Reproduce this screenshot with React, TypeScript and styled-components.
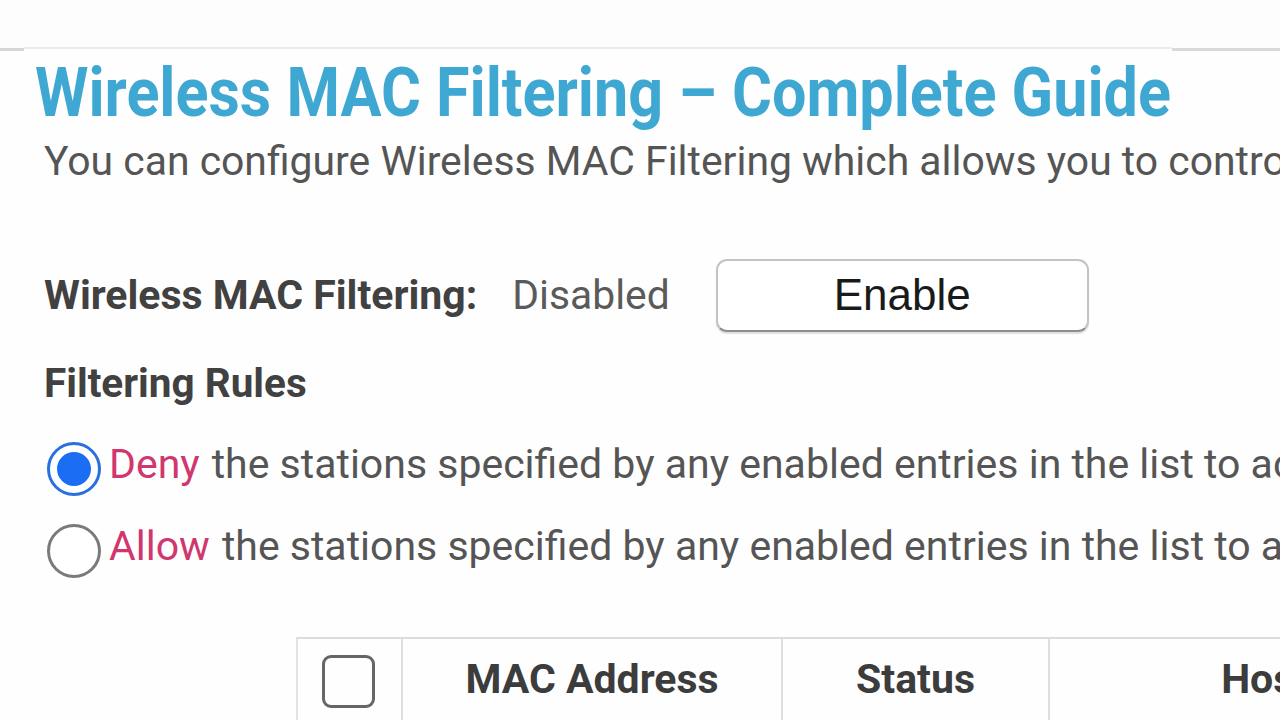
import React from "react";
import styled, { createGlobalStyle } from "styled-components";

const Global = createGlobalStyle`
  html, body { margin: 0; padding: 0; background: #fefefe; }
  body { font-family: Roboto, "Noto Sans", Arial, sans-serif; width: 1280px; height: 720px; overflow: hidden; }
`;

const Page = styled.div`
  width: 1280px;
  height: 720px;
  overflow: hidden;
  display: flex;
  flex-direction: column;
`;

const TopBand = styled.div`
  flex: none;
  height: 47px;
  background: #fdfdfd;
`;

const RuleRow = styled.div`
  flex: none;
  display: flex;
  height: 3px;
`;

const RuleSeg = styled.div<{ $w?: number; $tone: string; $thin?: boolean }>`
  ${(p) => (p.$w ? `width: ${p.$w}px;` : "flex: 1;")}
  border-top: ${(p) => (p.$thin ? "2px" : "3px")} solid ${(p) => p.$tone};
  margin-top: ${(p) => (p.$thin ? "0" : "1px")};
`;

const Content = styled.div`
  flex: none;
  display: flex;
  flex-direction: column;
  padding-left: 44px;
`;

const Title = styled.h1`
  margin: 3px 0 0 -9px;
  font-size: 68px;
  line-height: 80px;
  font-weight: 700;
  color: #3fa8d2;
  white-space: nowrap;
  transform: scaleX(0.898);
  transform-origin: left center;
`;

const Subtitle = styled.p`
  margin: 4px 0 0 0;
  font-size: 40.9px;
  line-height: 48px;
  color: #555;
  white-space: nowrap;
`;

const StatusRow = styled.div`
  display: flex;
  align-items: center;
  margin-top: 74px;
  height: 72px;
`;

const Label = styled.span`
  font-size: 41px;
  font-weight: 700;
  color: #414141;
  white-space: nowrap;
`;

const Value = styled.span`
  font-size: 40.8px;
  color: #5a5a5a;
  margin-left: 35px;
  white-space: nowrap;
`;

const Button = styled.button`
  margin-left: 46px;
  width: 373px;
  height: 73px;
  border: 2px solid #c4c4c4;
  border-bottom-color: #8e8e8e;
  border-radius: 11px;
  background: #fff;
  box-shadow: 0 2px 1px rgba(0, 0, 0, 0.12);
  font-family: "Liberation Sans", Arial, sans-serif;
  font-size: 44px;
  color: #1a1a1a;
  padding: 0;
`;

const SectionTitle = styled.h2`
  margin: 30px 0 0 0;
  font-size: 40.5px;
  line-height: 44px;
  font-weight: 700;
  color: #414141;
`;

const RuleList = styled.div`
  display: flex;
  flex-direction: column;
  gap: 22px;
  margin-top: 29px;
  margin-left: 3px;
`;

const RuleLine = styled.label`
  display: flex;
  align-items: center;
  height: 60px;
  white-space: nowrap;
  font-size: 41px;
  color: #555;
`;

const Radio = styled.span<{ $on?: boolean }>`
  flex: none;
  box-sizing: border-box;
  width: 54px;
  height: 54px;
  margin-top: 10px;
  margin-right: 8px;
  border-radius: 50%;
  border: ${(p) => (p.$on ? "3px solid #2a6fe0" : "3px solid #7a7a7a")};
  display: flex;
  align-items: center;
  justify-content: center;
  background: #fff;
`;

const RadioDot = styled.span`
  width: 34px;
  height: 34px;
  border-radius: 50%;
  background: #1b6ef3;
`;

const Keyword = styled.span`
  color: #d0376f;
  margin-right: 12px;
`;

const Table = styled.div`
  margin-top: 61px;
  margin-left: 252px;
  display: flex;
  border-top: 2px solid #dcdcdc;
  border-left: 2px solid #e2e2e2;
  width: max-content;
`;

const HeadCell = styled.div<{ $w: number }>`
  width: ${(p) => p.$w}px;
  height: 86px;
  flex: none;
  box-sizing: border-box;
  padding-bottom: 6px;
  border-right: 2px solid #dedede;
  display: flex;
  align-items: center;
  justify-content: center;
  font-size: 41px;
  font-weight: 700;
  color: #3c3c3c;
  white-space: nowrap;
`;

const Check = styled.span`
  width: 53px;
  height: 53px;
  box-sizing: border-box;
  border: 3px solid #666;
  border-radius: 9px;
  margin-top: 5px;
  margin-left: -3px;
`;

export default function App() {
  return (
    <Page>
      <Global />
      <TopBand />
      <RuleRow>
        <RuleSeg $w={24} $tone="#d6d6d6" />
        <RuleSeg $w={1148} $tone="#ececec" $thin />
        <RuleSeg $tone="#d9d9d9" />
      </RuleRow>
      <Content>
        <Title>Wireless MAC Filtering – Complete Guide</Title>
        <Subtitle>
          You can configure Wireless MAC Filtering which allows you to control wireless access
        </Subtitle>
        <StatusRow>
          <Label>Wireless MAC Filtering:</Label>
          <Value>Disabled</Value>
          <Button>Enable</Button>
        </StatusRow>
        <SectionTitle>Filtering Rules</SectionTitle>
        <RuleList>
          <RuleLine>
            <Radio $on>
              <RadioDot />
            </Radio>
            <Keyword>Deny</Keyword>
            the stations specified by any enabled entries in the list to access.
          </RuleLine>
          <RuleLine>
            <Radio />
            <Keyword>Allow</Keyword>
            the stations specified by any enabled entries in the list to access.
          </RuleLine>
        </RuleList>
        <Table>
          <HeadCell $w={105}>
            <Check />
          </HeadCell>
          <HeadCell $w={380}>MAC Address</HeadCell>
          <HeadCell $w={267}>Status</HeadCell>
          <HeadCell $w={550}>Host Name</HeadCell>
        </Table>
      </Content>
    </Page>
  );
}
